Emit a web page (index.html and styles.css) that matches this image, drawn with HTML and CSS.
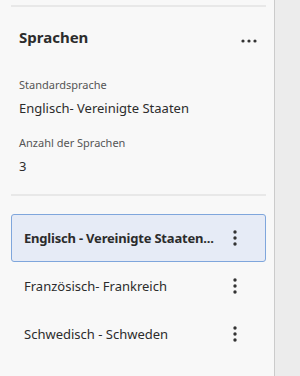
FILE: index.html
```html
<!DOCTYPE html>
<html lang="de">
<head>
    <meta charset="UTF-8">
    <meta name="viewport" content="width=device-width, initial-scale=1.0">
    <title>Sprachen</title>
    <link rel="stylesheet" href="styles.css">
</head>
<body>
<div class="panel">
    <hr class="divider top">
    <section class="summary">
        <div class="summary-head">
            <h2>Sprachen</h2>
            <button class="more" aria-label="Mehr">
                <svg width="16" height="4" viewBox="0 0 16 4"><circle cx="2" cy="2" r="1.6"/><circle cx="8" cy="2" r="1.6"/><circle cx="14" cy="2" r="1.6"/></svg>
            </button>
        </div>
        <div class="field">
            <span class="label">Standardsprache</span>
            <span class="value">Englisch- Vereinigte Staaten</span>
        </div>
        <div class="field">
            <span class="label">Anzahl der Sprachen</span>
            <span class="value">3</span>
        </div>
    </section>
    <hr class="divider">
    <ul class="lang-list">
        <li class="lang selected">
            <span class="lang-name">Englisch - Vereinigte Staaten...</span>
            <button class="kebab" aria-label="Optionen">
                <svg width="4" height="16" viewBox="0 0 4 16"><circle cx="2" cy="2" r="1.7"/><circle cx="2" cy="8" r="1.7"/><circle cx="2" cy="14" r="1.7"/></svg>
            </button>
        </li>
        <li class="lang">
            <span class="lang-name">Französisch- Frankreich</span>
            <button class="kebab" aria-label="Optionen">
                <svg width="4" height="16" viewBox="0 0 4 16"><circle cx="2" cy="2" r="1.7"/><circle cx="2" cy="8" r="1.7"/><circle cx="2" cy="14" r="1.7"/></svg>
            </button>
        </li>
        <li class="lang">
            <span class="lang-name">Schwedisch - Schweden</span>
            <button class="kebab" aria-label="Optionen">
                <svg width="4" height="16" viewBox="0 0 4 16"><circle cx="2" cy="2" r="1.7"/><circle cx="2" cy="8" r="1.7"/><circle cx="2" cy="14" r="1.7"/></svg>
            </button>
        </li>
    </ul>
</div>
</body>
</html>
```

FILE: styles.css
```css
body {
    margin: 0;
    background-color: #ececec;
    font-family: "Noto Sans", Arial, sans-serif;
    color: #2c2c2c;
}
.panel {
    width: 275px;
    height: 376px;
    box-sizing: border-box;
    background: #f8f8f8;
    border-right: 1px solid #cbcbcb;
    padding: 0 8px 0 11px;
}
.divider {
    border: none;
    border-top: 2px solid #e8e8e8;
    margin: 0;
}
.divider.top {
    position: relative;
    top: 5px;
}
.summary {
    padding: 25px 0 19px 8px;
}
.summary-head {
    display: flex;
    justify-content: space-between;
    align-items: center;
    margin-bottom: 30px;
}
.summary-head h2 {
    font-size: 15px;
    font-weight: bold;
    margin: 0;
    line-height: 20px;
}
.more, .kebab {
    background: none;
    border: none;
    padding: 0;
    cursor: pointer;
    display: flex;
}
.more {
    margin-right: 9px;
    margin-top: 8px;
}
.more svg, .kebab svg {
    fill: #333;
}
.field {
    display: flex;
    flex-direction: column;
    margin-bottom: 18px;
}
.field:last-child {
    margin-bottom: 0;
}
.label {
    font-size: 11px;
    color: #555;
    line-height: 16px;
}
.value {
    font-size: 13px;
    line-height: 18px;
    margin-top: 6px;
}
.lang-list {
    list-style: none;
    margin: 0;
    padding: 18px 0 0;
}
.lang {
    display: flex;
    align-items: center;
    justify-content: space-between;
    height: 48px;
    padding: 0 28px 0 12px;
    border: 1px solid transparent;
    border-radius: 3px;
    font-size: 13px;
    box-sizing: border-box;
}
.lang.selected {
    background: #e6ebf6;
    border-color: #7fa6dc;
    font-weight: bold;
    letter-spacing: -0.2px;
}
.lang-name {
    white-space: nowrap;
    margin-right: 12px;
}
```
